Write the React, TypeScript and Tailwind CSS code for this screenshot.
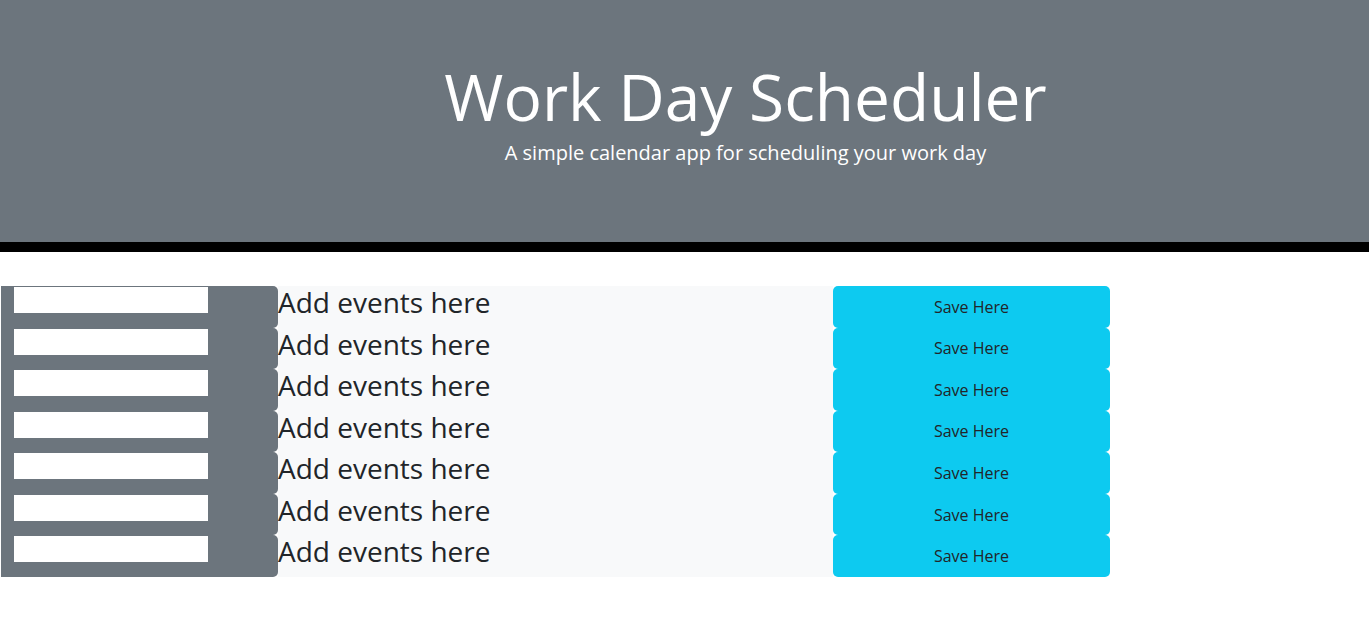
import React from "react";

const rows = [0, 1, 2, 3, 4, 5, 6];

export default function App() {
  return (
    <div className="min-h-[643px] bg-white" style={{ fontFamily: '"Open Sans", sans-serif' }}>
      <header className="h-[252px] bg-[#6c757d] border-b-[10px] border-black flex flex-col items-center pl-[122px] pt-[58px] text-white">
        <h1 className="text-[64px] font-normal leading-[78px]">Work Day Scheduler</h1>
        <p className="text-[20px] leading-[30px] mt-[2px]">A simple calendar app for scheduling your work day</p>
      </header>
      <div className="mt-[34px] w-[1110px] flex flex-col">
        {rows.map((i) => (
          <div key={i} className="flex h-[41.57px]">
            <div className="w-[277px] ml-[1px] bg-[#6c757d] rounded-r-[5px] pl-[13px] pt-[1px]">
              <div className="w-[194px] h-[26px] bg-white" />
            </div>
            <div className="w-[555px] bg-[#f8f9fa] text-[#212529] text-[28px] leading-[33px]">
              Add events here
            </div>
            <div className="w-[277px] bg-[#0dcaf0] rounded-[5px] flex items-center justify-center text-[16px] text-[#212529]">
              Save Here
            </div>
          </div>
        ))}
      </div>
    </div>
  );
}
